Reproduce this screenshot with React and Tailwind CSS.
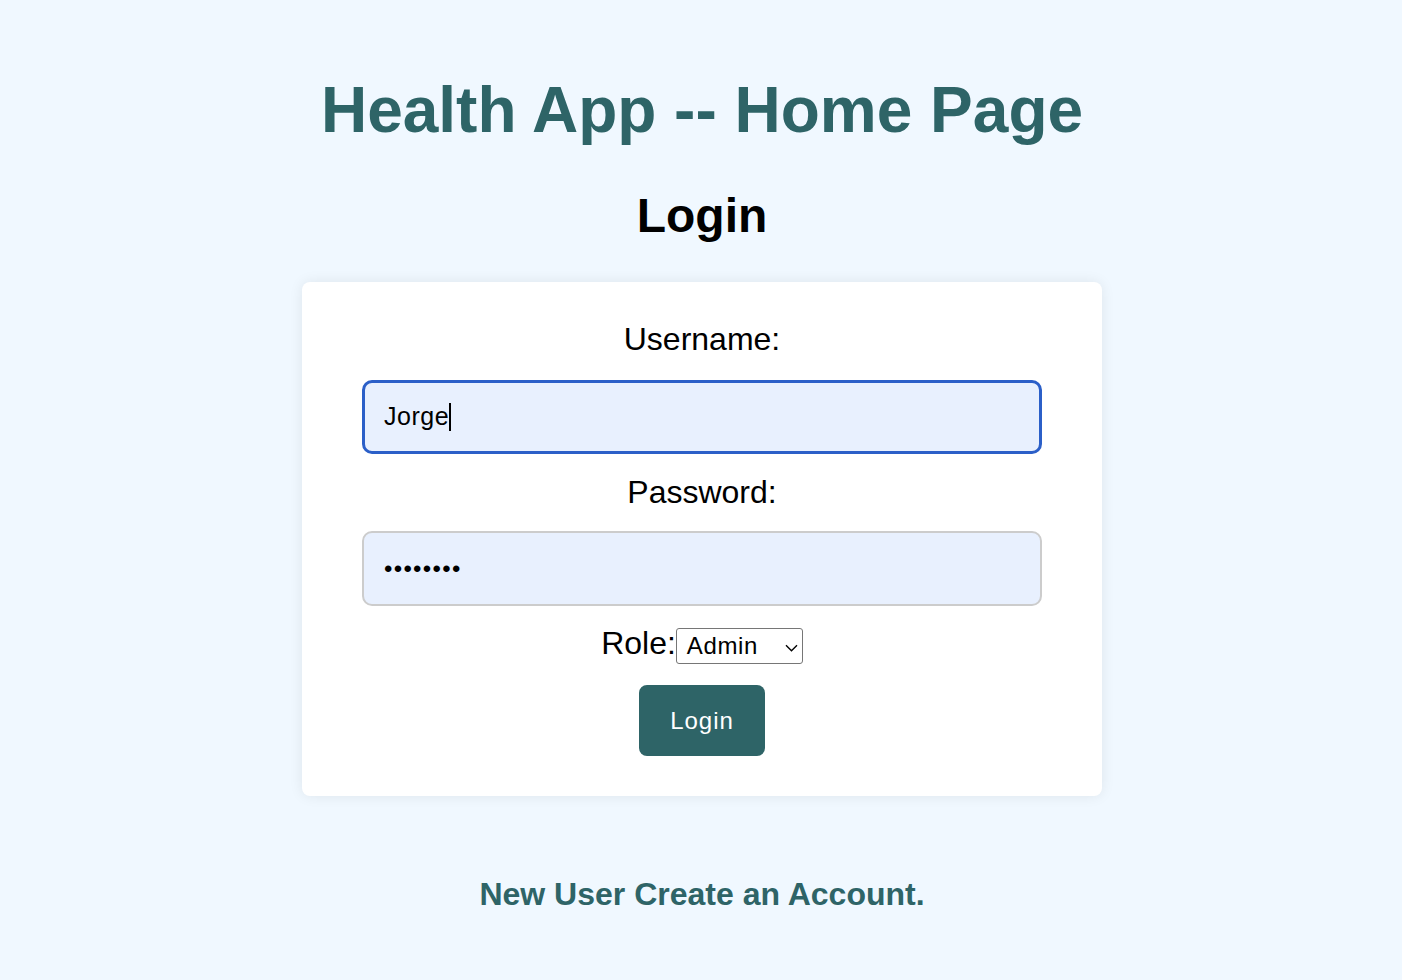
import React from "react";

export default function App() {
  return (
    <div className="min-h-screen bg-[#f0f8ff] pl-[2px] flex flex-col items-center font-['Liberation_Sans',Arial,sans-serif] text-black">
      <h1 className="mt-[73px] text-[64px] leading-[74px] font-bold text-[#2e6467]">
        Health App -- Home Page
      </h1>
      <h2 className="mt-[41px] text-[48px] leading-[55px] font-bold">Login</h2>
      <div className="mt-[39px] w-[800px] bg-white rounded-lg shadow-[0_0_14px_rgba(0,0,0,0.08)] px-[60px] pt-[39px] pb-[40px] flex flex-col items-center">
        <label className="text-[32px] leading-[37px]">Username:</label>
        <div className="mt-[22px] w-full h-[74px] border-[3px] border-[#2b5fc8] rounded-[10px] bg-[#e8f0fe] pl-[19px] flex items-center text-[25px] tracking-[0.5px]">
          <span>Jorge</span>
          <span className="inline-block w-[2px] h-[28px] bg-black"></span>
        </div>
        <label className="mt-[20px] text-[32px] leading-[37px]">Password:</label>
        <div className="mt-[20px] w-full h-[75px] border-2 border-[#cccccc] rounded-[10px] bg-[#e8f0fe] pl-[20px] flex items-center">
          <span className="text-[24px] tracking-[1.3px]">••••••••</span>
        </div>
        <div className="mt-[19px] flex items-baseline">
          <span className="text-[32px] leading-[37px]">Role:</span>
          <div className="relative w-[127px] h-[36px] border border-[#767676] rounded-[3px] bg-white pl-[10px] flex items-center text-[24px] tracking-[0.6px]">
            <span>Admin</span>
            <svg
              className="absolute right-[4px] top-[15px]"
              width="13"
              height="8"
              viewBox="0 0 13 8"
              fill="none"
            >
              <path d="M1 1.2l5.5 5.5 5.5-5.5" stroke="#000" strokeWidth="1.4" />
            </svg>
          </div>
        </div>
        <button className="mt-[21px] w-[126px] h-[71px] rounded-lg bg-[#2e6467] text-white text-[24px] tracking-[1px]">
          Login
        </button>
      </div>
      <a className="mt-[80px] text-[32px] leading-[37px] font-bold text-[#2e6467] no-underline">
        New User Create an Account.
      </a>
    </div>
  );
}
